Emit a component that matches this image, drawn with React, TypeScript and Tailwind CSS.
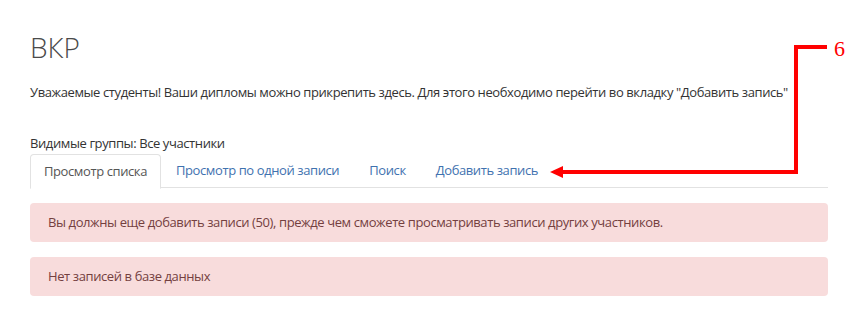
export default function App() {
  const tabs = ["Просмотр по одной записи", "Поиск", "Добавить запись"];
  return (
    <div className="relative w-[858px] h-[310px] bg-white overflow-hidden" style={{ fontFamily: '"Open Sans", "Noto Sans", sans-serif' }}>
      <div className="w-[798px] ml-[30px] pt-[30px] flex flex-col">
        {/* Title */}
        <h2 className="text-[28px] leading-[34px] font-light text-[#4a4a4a]">ВКР</h2>

        <p className="mt-[18px] text-[13px] leading-[20px] text-[#333] tracking-[-0.4px]">
          Уважаемые студенты! Ваши дипломы можно прикрепить здесь. Для этого необходимо перейти во вкладку "Добавить запись"
        </p>

        <div className="mt-[31px] text-[13px] leading-[20px] text-[#333] tracking-[-0.4px]">Видимые группы: Все участники</div>

        {/* Tabs */}
        <div className="mt-[1px] flex border-b border-[#e2e2e2] h-[34px]">
          <div className="h-[35px] px-[13px] flex items-center bg-white border border-[#e2e2e2] border-b-white rounded-t-[4px] text-[13px] text-[#555] tracking-[-0.4px]">
            Просмотр списка
          </div>
          {tabs.map((t) => (
            <div key={t} className="px-[15px] flex items-center text-[13px] text-[#3f72af] tracking-[-0.4px]">
              {t}
            </div>
          ))}
        </div>

        {/* Alerts */}
        <div className="mt-[15px] h-[39px] px-[18px] flex items-center bg-[#f8dcdc] rounded-[4px] text-[13px] text-[#74403f] tracking-[-0.4px]">
          Вы должны еще добавить записи (50), прежде чем сможете просматривать записи других участников.
        </div>
        <div className="mt-[15px] h-[39px] px-[18px] flex items-center bg-[#f8dcdc] rounded-[4px] text-[13px] text-[#74403f] tracking-[-0.4px]">
          Нет записей в базе данных
        </div>
      </div>

      {/* Annotation arrow */}
      <svg className="absolute left-0 top-0 pointer-events-none" width="858" height="310">
        <polyline points="562,172 796,172 796,47 827,47" fill="none" stroke="#ff0000" strokeWidth="4" />
        <polygon points="550,172 563,166 563,178" fill="#ff0000" />
      </svg>
      <div className="absolute left-[834px] top-[36px] text-[22px] leading-[26px] text-[#ff0000]" style={{ fontFamily: '"Liberation Serif", serif' }}>
        6
      </div>
    </div>
  );
}
